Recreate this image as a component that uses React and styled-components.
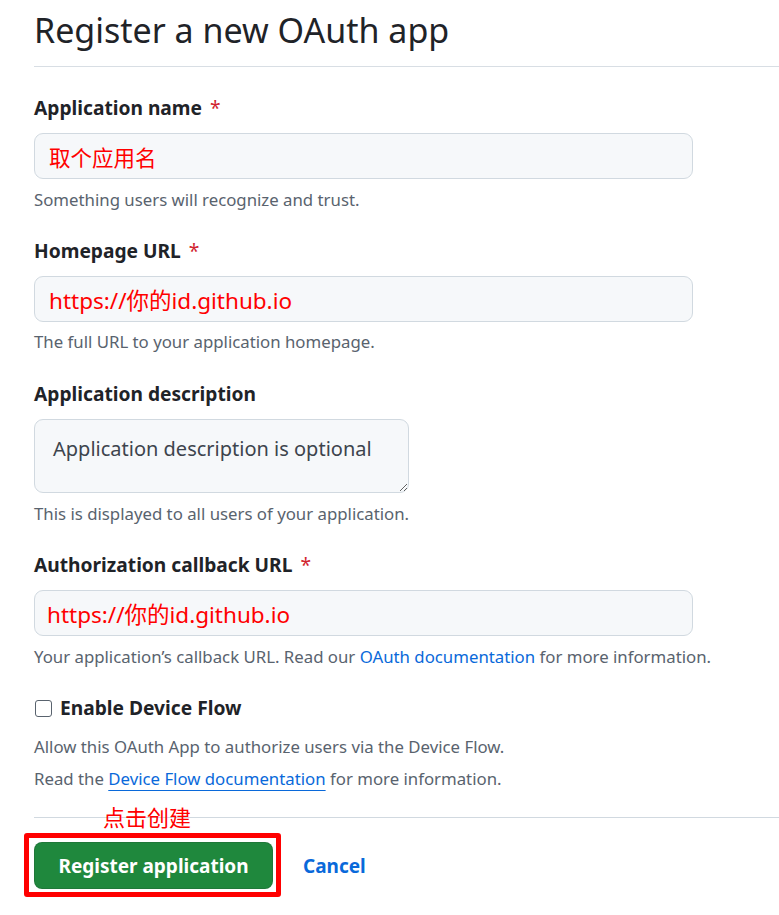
import React from "react";
import styled, { createGlobalStyle } from "styled-components";

const Global = createGlobalStyle`
  html, body { margin: 0; padding: 0; background: #ffffff; }
  body {
    font-family: "Noto Sans", "Noto Sans CJK SC", sans-serif;
    color: #1f2328;
  }
`;

const Page = styled.div`
  padding: 0 0 30px 34px;
  width: 779px;
  box-sizing: border-box;
`;

const Header = styled.div`
  padding: 8px 0 13px;
  border-bottom: 1px solid #d8dee4;
`;

const Title = styled.h1`
  margin: 0;
  font-size: 34px;
  line-height: 45px;
  font-weight: 400;
  color: #1f2328;
`;

const Group = styled.div`
  margin-top: ${(p) => p.$top || 24}px;
`;

const Label = styled.label`
  display: block;
  font-size: 19.2px;
  line-height: 30px;
  font-weight: 700;
  color: #1f2328;
  margin-bottom: 10px;
`;

const Req = styled.span`
  color: #d1242f;
  margin-left: 8px;
  font-weight: 400;
`;

const TextInput = styled.input`
  display: block;
  box-sizing: border-box;
  width: 659px;
  height: 46px;
  padding: 0 ${(p) => p.$pad || 14}px;
  font-family: "Noto Sans", "Noto Sans CJK SC", sans-serif;
  font-size: ${(p) => p.$size || 22.5}px;
  color: #ff0000;
  background: #f6f8fa;
  border: 1px solid #d1d9e0;
  border-radius: 9px;
  outline: none;
`;

const TextArea = styled.textarea`
  display: block;
  box-sizing: border-box;
  width: 375px;
  height: 74px;
  padding: 14px 18px;
  font-family: "Noto Sans", "Noto Sans CJK SC", sans-serif;
  font-size: 20px;
  line-height: 30px;
  background: #f6f8fa;
  border: 1px solid #d1d9e0;
  border-radius: 9px;
  outline: none;
  resize: both;
  &::placeholder { color: #3d444d; opacity: 1; }
`;

const Hint = styled.p`
  margin: ${(p) => p.$top || 9}px 0 0;
  font-size: 16.8px;
  line-height: 24px;
  color: #59636e;
`;

const Link = styled.a`
  color: #0969da;
  text-decoration: ${(p) => (p.$underline ? "underline" : "none")};
  text-underline-offset: 5px;
  text-decoration-thickness: 1px;
`;

const CheckRow = styled.label`
  display: flex;
  align-items: center;
  gap: 8px;
  margin-top: 24px;
  font-size: 19.2px;
  line-height: 30px;
  font-weight: 700;
  color: #1f2328;
`;

const Check = styled.input`
  appearance: none;
  margin: 0 0 0 1px;
  width: 17px;
  height: 17px;
  border: 1.5px solid #59636e;
  border-radius: 3px;
  background: #fff;
  box-sizing: border-box;
`;

const Actions = styled.div`
  position: relative;
  margin-top: 26px;
  border-top: 1px solid #d1d9e0;
  padding-top: 24px;
  display: flex;
  align-items: center;
  gap: 30px;
`;

const Note = styled.span`
  position: absolute;
  left: 69px;
  top: -16px;
  font-size: 22px;
  line-height: 28px;
  color: #ff0000;
  font-family: "Noto Sans CJK SC", sans-serif;
`;

const ButtonWrap = styled.div`
  position: relative;
`;

const Highlight = styled.span`
  position: absolute;
  inset: -9px -8px -8px -10px;
  border: 5px solid #ff0000;
  border-radius: 3px;
  pointer-events: none;
`;

const Primary = styled.button`
  display: block;
  box-sizing: border-box;
  width: 239px;
  height: 47px;
  border-radius: 8px;
  border: 1px solid rgba(31, 35, 40, 0.15);
  background: #1f883d;
  color: #ffffff;
  font-family: "Noto Sans", sans-serif;
  font-size: 19px;
  font-weight: 700;
  cursor: pointer;
`;

const Cancel = styled.a`
  color: #0969da;
  font-size: 19px;
  font-weight: 700;
  text-decoration: none;
`;

export default function App() {
  return (
    <>
      <Global />
      <Page>
        <Header>
          <Title>Register a new OAuth app</Title>
        </Header>

        <Group $top={26}>
          <Label>
            Application name<Req>*</Req>
          </Label>
          <TextInput $size={21.5} value="取个应用名" readOnly />
          <Hint>Something users will recognize and trust.</Hint>
        </Group>

        <Group>
          <Label>
            Homepage URL<Req>*</Req>
          </Label>
          <TextInput value="https://你的id.github.io" readOnly />
          <Hint $top={8}>The full URL to your application homepage.</Hint>
        </Group>

        <Group $top={25}>
          <Label>Application description</Label>
          <TextArea placeholder="Application description is optional" />
          <Hint>This is displayed to all users of your application.</Hint>
        </Group>

        <Group>
          <Label>
            Authorization callback URL<Req>*</Req>
          </Label>
          <TextInput $pad={12} value="https://你的id.github.io" readOnly />
          <Hint>
            Your application’s callback URL. Read our{" "}
            <Link href="#">OAuth documentation</Link> for more information.
          </Hint>
        </Group>

        <CheckRow>
          <Check type="checkbox" />
          Enable Device Flow
        </CheckRow>
        <Hint $top={12}>Allow this OAuth App to authorize users via the Device Flow.</Hint>
        <Hint $top={8}>
          Read the <Link href="#" $underline>Device Flow documentation</Link> for more information.
        </Hint>

        <Actions>
          <Note>点击创建</Note>
          <ButtonWrap>
            <Highlight />
            <Primary type="button">Register application</Primary>
          </ButtonWrap>
          <Cancel href="#">Cancel</Cancel>
        </Actions>
      </Page>
    </>
  );
}
